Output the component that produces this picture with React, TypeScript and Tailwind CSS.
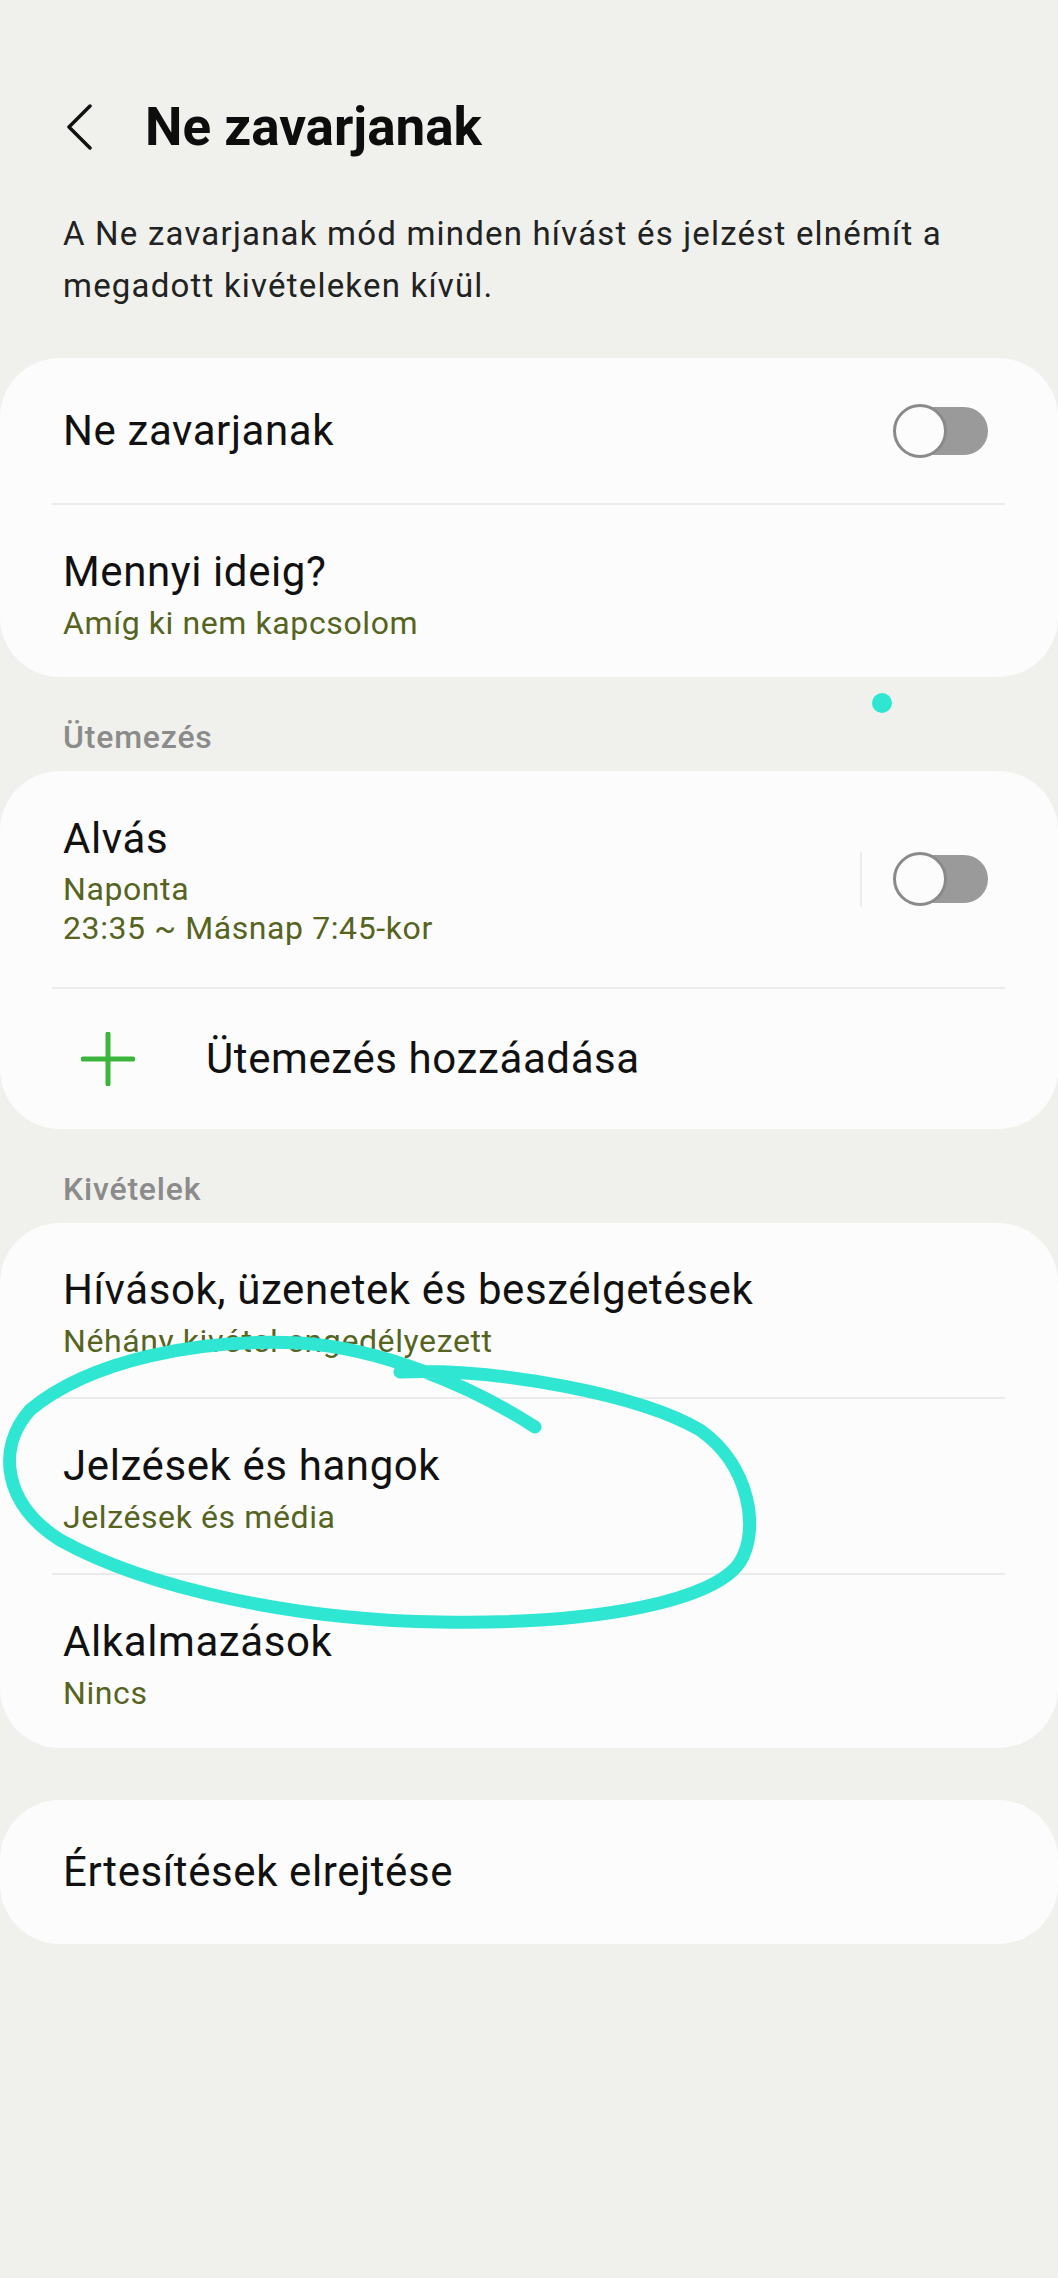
import React from "react";

const Toggle = () => (
  <div className="relative w-[95px] h-[54px] shrink-0">
    <div className="absolute right-0 top-[3px] h-[48px] w-[80px] rounded-full bg-[#9a9a9a]" />
    <div className="absolute left-0 top-0 h-[54px] w-[54px] rounded-full border-[3px] border-[#8a8a8a] bg-[#fcfcfc]" />
  </div>
);

const Divider = () => <div className="h-[2px] ml-[52px] mr-[53px] bg-[#ebebeb]" />;

const titleCls = "text-[42px] leading-[50px] tracking-[0.6px] text-[#111]";
const subCls = "text-[32px] leading-[40px] tracking-[0.6px] text-[#56641f]";

const Row = ({ title, sub, h }: { title: string; sub?: string; h: string }) => (
  <div className={`${h} flex flex-col pl-[63px] pt-[42px]`}>
    <div className={titleCls}>{title}</div>
    {sub && <div className={`mt-[6px] ${subCls}`}>{sub}</div>}
  </div>
);

const SectionLabel = ({ children }: { children: string }) => (
  <div className="mt-[40px] mb-[14px] pl-[63px] text-[32px] leading-[40px] tracking-[0.8px] font-medium text-[#8b8b8b]">
    {children}
  </div>
);

export default function App() {
  return (
    <div className="relative min-h-[2278px] bg-[#f0f1ed] font-['Roboto',sans-serif] overflow-hidden">
      {/* header */}
      <div className="flex items-center pt-[95px] pl-[65px]">
        <svg width="30" height="46" viewBox="0 0 30 46" fill="none">
          <path d="M25 2 L4 23 L25 44" stroke="#111" strokeWidth="3.5" strokeLinecap="round" strokeLinejoin="round" />
        </svg>
        <h1 className="ml-[50px] text-[53px] leading-[64px] font-bold text-[#0d0d0d]">Ne zavarjanak</h1>
      </div>

      <p className="mt-[49px] pl-[63px] pr-[90px] text-[33px] leading-[52px] tracking-[1.2px] text-[#222]">
        A Ne zavarjanak mód minden hívást és jelzést elnémít a megadott kivételeken kívül.
      </p>

      {/* main switch */}
      <div className="mt-[46px] rounded-[60px] bg-[#fcfcfc]">
        <div className="h-[145px] flex items-center justify-between pl-[63px] pr-[70px]">
          <span className={titleCls}>Ne zavarjanak</span>
          <Toggle />
        </div>
        <Divider />
        <Row title="Mennyi ideig?" sub="Amíg ki nem kapcsolom" h="h-[172px]" />
      </div>

      <SectionLabel>Ütemezés</SectionLabel>
      <div className="rounded-[60px] bg-[#fcfcfc]">
        <div className="h-[216px] flex items-center justify-between pr-[70px]">
          <div className="flex flex-col self-start pl-[63px] pt-[43px]">
            <div className={titleCls}>Alvás</div>
            <div className="mt-[6px] text-[32px] leading-[39px] tracking-[0.6px] text-[#56641f]">Naponta</div>
            <div className="text-[32px] leading-[39px] tracking-[0.6px] text-[#56641f]">23:35 ~ Másnap 7:45-kor</div>
          </div>
          <div className="flex items-center">
            <div className="w-[2px] h-[55px] bg-[#ececec] mr-[31px]" />
            <Toggle />
          </div>
        </div>
        <Divider />
        <div className="h-[140px] flex items-center pl-[81px]">
          <svg width="54" height="54" viewBox="0 0 54 54">
            <path d="M27 2 V52 M2 27 H52" stroke="#3cb53c" strokeWidth="5" strokeLinecap="round" />
          </svg>
          <span className={`ml-[71px] ${titleCls}`}>Ütemezés hozzáadása</span>
        </div>
      </div>

      <SectionLabel>Kivételek</SectionLabel>
      <div className="rounded-[60px] bg-[#fcfcfc]">
        <Row title="Hívások, üzenetek és beszélgetések" sub="Néhány kivétel engedélyezett" h="h-[174px]" />
        <Divider />
        <Row title="Jelzések és hangok" sub="Jelzések és média" h="h-[174px]" />
        <Divider />
        <Row title="Alkalmazások" sub="Nincs" h="h-[173px]" />
      </div>

      <div className="mt-[52px] h-[144px] flex items-center pl-[63px] rounded-[60px] bg-[#fcfcfc]">
        <span className={titleCls}>Értesítések elrejtése</span>
      </div>

      {/* hand-drawn annotation */}
      <svg className="absolute left-0 top-0 pointer-events-none" width="1058" height="2278" viewBox="0 0 1058 2278" fill="none">
        <circle cx="882" cy="703" r="10" fill="#2fe6d2" />
        <path
          d="M400 1372 C500 1368 640 1395 700 1430 C750 1465 760 1530 740 1562 C715 1600 600 1625 440 1622 C300 1620 150 1590 60 1540 C5 1505 -5 1450 30 1410 C90 1360 200 1338 300 1343 C380 1348 470 1385 535 1427"
          stroke="#2fe6d2"
          strokeWidth="13"
          strokeLinecap="round"
          strokeLinejoin="round"
        />
      </svg>
    </div>
  );
}
